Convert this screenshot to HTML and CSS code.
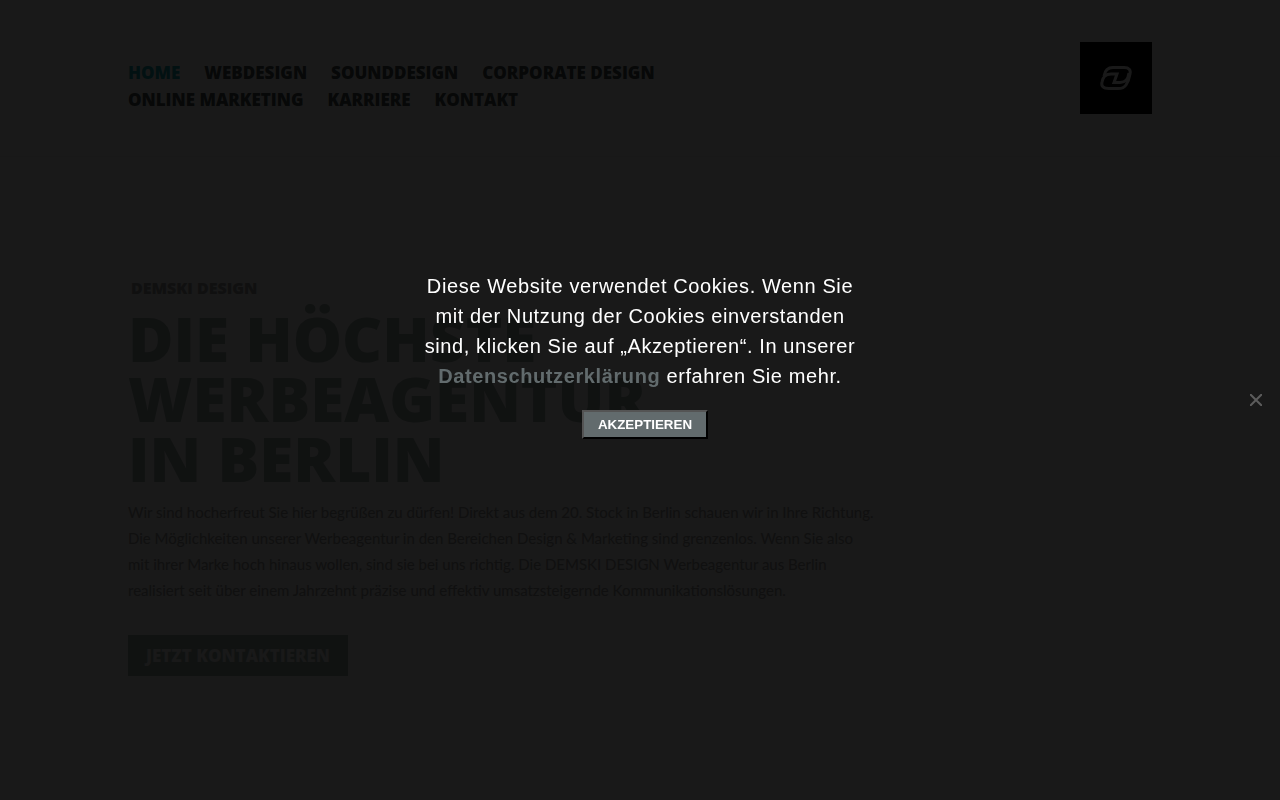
FILE: index.html
```
<!DOCTYPE html>
<html lang="de">
<head>
    <meta charset="UTF-8">
    <meta name="viewport" content="width=device-width, initial-scale=1.0">
    <title>DEMSKI DESIGN</title>
    <link rel="stylesheet" href="styles.css">
</head>
<body>
    <!-- Header -->
    <header class="header">
        <nav class="nav">
            <a href="#" class="active">Home</a>
            <a href="#">Webdesign</a>
            <a href="#">Sounddesign</a>
            <a href="#">Corporate Design</a>
            <a href="#">Online Marketing</a>
            <a href="#">Karriere</a>
            <a href="#">Kontakt</a>
        </nav>
        <a href="#" class="logo" aria-label="DEMSKI DESIGN">
            <svg viewBox="0 0 72 72" fill="none" stroke="#fff" stroke-width="3">
                <path d="M24 34 C25 28 28 25.500 33 25.500 H44 C49 25.500 51 28 50 32 C49 38 48 40 46 43 C44 46 42 46.500 38 46.500 H29 C23 46.500 21 44 22 40 C23 35 25 32 31 32 H37 L34 40.500 H40 C46 40.500 48 37 49 31"/>
            </svg>
        </a>
    </header>

    <!-- Hero -->
    <main class="hero">
        <h2>Demski Design</h2>
        <h1>Die höchste<br>Werbeagentur<br>in Berlin</h1>
        <p>Wir sind hocherfreut Sie hier begrüßen zu dürfen! Direkt aus dem 20. Stock in Berlin schauen wir in Ihre Richtung.<br>
        Die Möglichkeiten unserer Werbeagentur in den Bereichen Design &amp; Marketing sind grenzenlos. Wenn Sie also<br>
        mit ihrer Marke hoch hinaus wollen, sind sie bei uns richtig. Die DEMSKI DESIGN Werbeagentur aus Berlin<br>
        realisiert seit über einem Jahrzehnt präzise und effektiv umsatzsteigernde Kommunikationslösungen.</p>
        <a href="#" class="contact">Jetzt kontaktieren</a>
    </main>

    <!-- Cookie Notice -->
    <div class="cookie-notice" role="dialog" aria-label="Cookies">
        <div class="cookie-box">
            <p>Diese Website verwendet Cookies. Wenn Sie mit der Nutzung der Cookies einverstanden sind, klicken Sie auf „Akzeptieren“. In unserer <a href="#">Datenschutzerklärung</a> erfahren Sie mehr.</p>
            <button class="accept">AKZEPTIEREN</button>
        </div>
        <button class="close" aria-label="Schließen">
            <svg viewBox="0 0 12 12" stroke="#5c5c5c" stroke-width="2">
                <path d="M0 0 L12 12 M12 0 L0 12"/>
            </svg>
        </button>
    </div>
</body>
</html>
```

FILE: styles.css
```
* {
    box-sizing: border-box;
}

body {
    margin: 0;
    background: #f8f8f8;
    color: #a0a0a0;
    font-family: Lato, sans-serif;
}

a {
    text-decoration: none;
}

/* Header */
.header {
    display: flex;
    justify-content: space-between;
    align-items: center;
    padding: 42px 10%;
    background: #fff;
    border-bottom: 1px solid #eee;
}

.nav {
    display: flex;
    flex-wrap: wrap;
    column-gap: 24px;
    max-width: 560px;
    padding-top: 16px;
}

.nav a {
    color: #465250;
    font-family: "Open Sans", sans-serif;
    font-size: 17px;
    font-weight: 800;
    line-height: 27px;
    text-transform: uppercase;
}

.nav a.active {
    color: #14aab4;
}

.logo {
    width: 72px;
    height: 72px;
    background: #000;
}

.logo svg {
    display: block;
}

/* Hero */
.hero {
    padding: 119px 10%;
}

.hero h2 {
    margin: 0 0 8px;
    padding-left: 3px;
    font-family: "Open Sans", sans-serif;
    font-size: 16px;
    font-weight: 800;
    line-height: 24px;
    text-transform: uppercase;
}

.hero h1 {
    margin: 0;
    color: #a0b2ac;
    font-family: "Open Sans", sans-serif;
    font-size: 62px;
    font-weight: 800;
    line-height: 60px;
    text-transform: uppercase;
}

.hero p {
    margin: 11px 0 32px;
    font-size: 15px;
    line-height: 26px;
    white-space: nowrap;
}

.contact {
    display: inline-block;
    padding: 0 18px;
    background: #a0b2ac;
    color: #f8f8f8;
    font-family: "Open Sans", sans-serif;
    font-size: 17px;
    font-weight: 800;
    line-height: 41px;
    text-transform: uppercase;
}

/* Cookie Notice */
.cookie-notice {
    position: fixed;
    inset: 0;
    display: flex;
    justify-content: center;
    align-items: flex-start;
    padding-top: 271px;
    background: rgba(0, 0, 0, 0.9);
    color: #fff;
    font-family: "Liberation Sans", Arial, sans-serif;
    text-align: center;
}

.cookie-box {
    width: 460px;
}

.cookie-box p {
    margin: 0 0 19px;
    font-size: 20px;
    line-height: 30px;
    letter-spacing: 0.03em;
}

.cookie-box p a {
    color: #626b6d;
    font-weight: bold;
}

.accept {
    margin-left: 10px;
    padding: 5px 14px;
    background: #626b6d;
    border: 2px outset #000;
    color: #fff;
    font-family: inherit;
    font-weight: bold;
    cursor: pointer;
}

.close {
    position: absolute;
    top: 50%;
    right: 18px;
    width: 12px;
    height: 12px;
    margin-top: -6px;
    padding: 0;
    background: none;
    border: none;
    cursor: pointer;
}

.close svg {
    display: block;
}
```
